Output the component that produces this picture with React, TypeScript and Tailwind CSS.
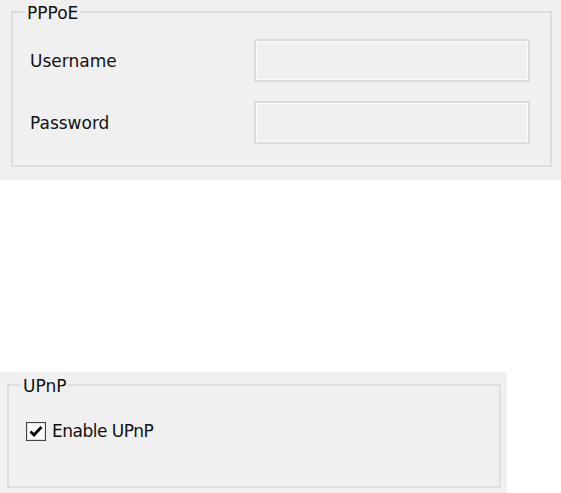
const font = { fontFamily: '"DejaVu Sans", Verdana, sans-serif' };

const GroupBox = ({
  title,
  className,
  children,
}: {
  title: string;
  className: string;
  children: React.ReactNode;
}) => (
  <div className={`relative border-2 border-[#dedede] ${className}`}>
    <span className="absolute -top-[10px] left-[12px] bg-[#f0f0f0] px-[2px] text-[17px] leading-[20px] text-[#111]">
      {title}
    </span>
    {children}
  </div>
);

const Field = ({ label }: { label: string }) => (
  <div className="flex h-[43px] items-center justify-between">
    <span className="text-[17px] leading-[20px] text-[#111]">{label}</span>
    <div className="h-[43px] w-[276px] border-2 border-[#dcdcdc] bg-[#f0f0f0] shadow-[inset_0_0_0_1px_#fbfbfb]" />
  </div>
);

const CheckIcon = () => (
  <svg width="20" height="19" viewBox="0 0 20 19">
    <rect x="0.5" y="0.5" width="19" height="18" fill="#fff" stroke="#444" />
    <rect x="1.5" y="1.5" width="17" height="16" fill="none" stroke="#e2e2e2" />
    <path d="M4.5 9.5 L8 13 L15.5 5" fill="none" stroke="#000" strokeWidth="2.8" />
  </svg>
);

export default function App() {
  return (
    <div className="flex flex-col bg-white" style={font}>
      <div className="h-[180px] w-full bg-[#f0f0f0] pt-[11px] pl-[11px] pr-[9px]">
        <GroupBox title="PPPoE" className="h-[156px]">
          <div className="flex flex-col gap-[19px] pt-[26px] pl-[17px] pr-[20px]">
            <Field label="Username" />
            <Field label="Password" />
          </div>
        </GroupBox>
      </div>

      <div className="h-[192px]" />

      <div className="h-[121px] w-[507px] bg-[#f0f0f0] pt-[12px] pl-[7px] pr-[6px]">
        <GroupBox title="UPnP" className="h-[104px]">
          <div className="flex items-center gap-[6px] pt-[35px] pl-[17px]">
            <CheckIcon />
            <span className="text-[17px] leading-[20px] tracking-[-0.5px] text-[#111]">Enable UPnP</span>
          </div>
        </GroupBox>
      </div>
    </div>
  );
}
